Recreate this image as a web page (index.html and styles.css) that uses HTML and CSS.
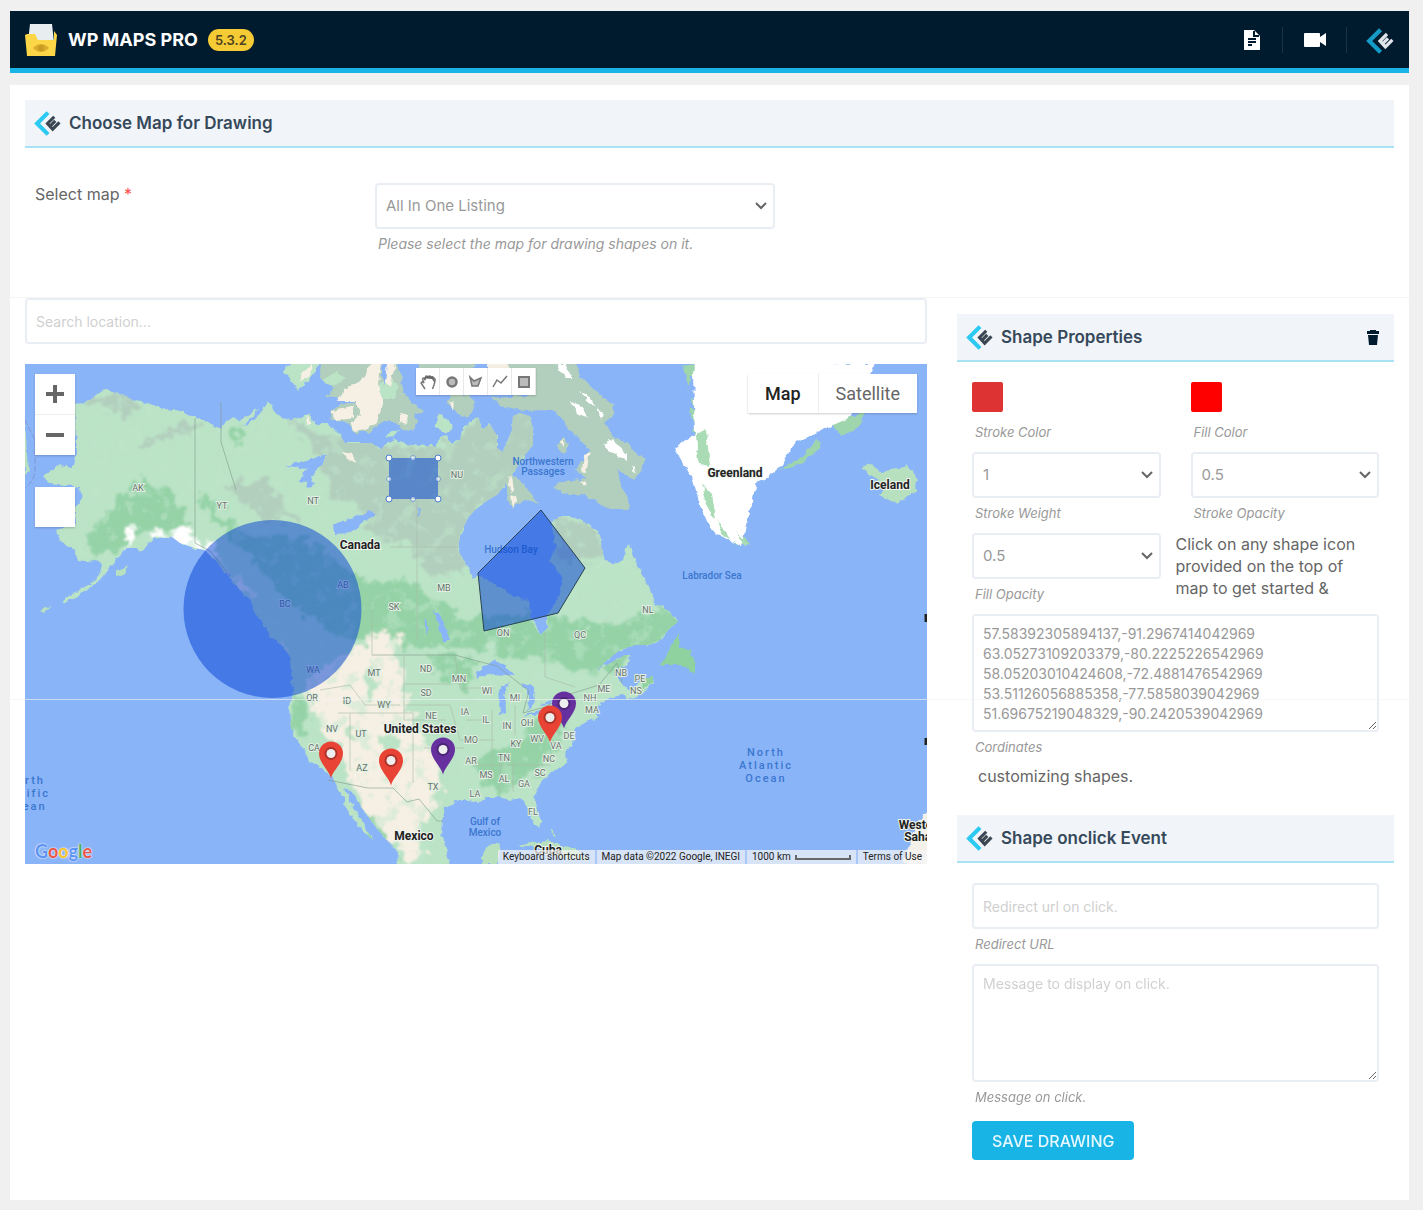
FILE: index.html
```html
<!DOCTYPE html>
<html lang="en">
<head>
<meta charset="utf-8">
<meta name="viewport" content="width=device-width, initial-scale=1">
<title>WP Maps Pro – Drawing</title>
<link rel="stylesheet" href="styles.css">
</head>
<body>
<svg class="sprite" aria-hidden="true">
  <symbol id="brand" viewBox="0 0 26 26">
    <path d="M13.500 2.500L3 13l10.500 10.500" fill="none" stroke="var(--arrow, #2cc9f3)" stroke-width="4"/>
    <path d="M19.500 6.500L13 13l5 5.500 6.500-6.500M15.500 15.500l5-5" fill="none" stroke="var(--mark, #3a4652)" stroke-width="3"/>
  </symbol>
  <symbol id="pin" viewBox="0 0 26 38">
    <path d="M13 37.500C11.500 30 1 22 1 12.500a12 12 0 0 1 24 0C25 22 14.500 30 13 37.500z" fill="currentColor"/>
    <circle cx="13" cy="12.500" r="6.500" fill="#000" opacity=".25"/>
    <circle cx="13" cy="12.500" r="4.500" fill="#eee"/>
  </symbol>
</svg>

<header class="topbar">
  <svg class="logo" viewBox="0 0 32 34" aria-hidden="true">
    <path d="M5 1h22l2 18H3z" fill="#e8edf0"/>
    <path d="M0 12l2-1h8l3 6h16V8l3 4-2 21H2z" fill="#fdd648"/>
    <path d="M8 25q8-8 16 0q-8 8-16 0z" fill="#d9ac2b"/>
    <circle cx="16" cy="25" r="3" fill="#c99b22"/>
  </svg>
  <h1>WP MAPS PRO</h1>
  <span class="version">5.3.2</span>
  <nav class="toplinks">
    <a href="#docs" aria-label="Documentation"><svg width="18" height="22" viewBox="0 0 18 22"><path d="M1 1h10l6 6v14H1z" fill="#fff"/><path d="M11 2v5h5M5 10h8M5 13h8M5 16h4" fill="none" stroke="#001b2e" stroke-width="2"/></svg></a>
    <a href="#videos" aria-label="Videos"><svg width="24" height="16" viewBox="0 0 24 16"><path d="M2 1h14q1 0 1 1v3l6-4v13l-6-4v4q0 1-1 1H2q-1 0-1-1V2q0-1 1-1z" fill="#fff"/></svg></a>
    <a class="vendor" href="#vendor" aria-label="Vendor site"><svg width="28" height="28"><use href="#brand"/></svg></a>
  </nav>
</header>

<main class="panel">
  <h2 class="title"><svg class="mark"><use href="#brand"/></svg>Choose Map for Drawing</h2>
  <div class="choose">
    <label for="map">Select map <span class="required">*</span></label>
    <div class="choose-field">
      <select id="map"><option>All In One Listing</option></select>
      <p class="hint">Please select the map for drawing shapes on it.</p>
    </div>
  </div>

  <div class="workspace">
    <section class="canvas">
      <input class="search" type="text" aria-label="Search location" placeholder="Search location...">
      <div class="map">
        <svg class="geo" viewBox="25 364 902 500" preserveAspectRatio="xMidYMid slice" role="img" aria-label="Map of North America">
          <defs>
            <path id="mainland" d="M75 405L90 400 105 389 115 393 128 396 132 400 150 404 165 409 180 411 188 415 197 417 208 422 215 427 222 429 226 421 234 417 240 421 250 413 260 408 243 427 252 421 262 412 268 402 272 405 276 414 282 418 290 420 300 418 308 414 315 424 328 424 337 430 345 443 360 443 372 443 380 450 388 442 395 439 405 444 420 446 436 446 440 438 446 436 452 445 460 440 462 430 470 422 478 416 482 430 490 424 497 436 497 448 503 452 508 440 512 430 513 416 520 413 530 416 533 430 533 445 525 455 515 470 505 485 497 495 488 500 475 510 468 518 460 535 458 550 462 558 468 568 472 578 480 575 495 585 515 597 529 600 531 615 535 627 540 635 548 628 547 615 552 608 560 595 562 580 557 568 550 560 556 545 552 530 553 520 562 517 576 517 588 525 600 535 602 550 605 560 614 565 623 560 628 543 635 560 643 575 650 590 655 603 668 611 678 622 670 628 660 640 648 645 635 645 620 650 605 662 598 670 612 662 625 655 632 655 628 665 615 672 622 685 632 690 640 682 652 676 654 682 640 695 628 700 622 695 612 697 600 703 595 712 598 718 585 722 575 730 573 745 565 750 567 762 552 772 540 785 534 795 537 808 541 820 539 828 533 822 528 808 520 798 510 800 500 797 488 797 480 802 468 800 458 800 445 808 442 820 441 835 445 845 450 866 397 866 398 852 385 838 372 822 360 805 352 792 345 788 348 797 355 810 362 820 368 832 373 840 363 832 355 822 350 812 344 805 346 802 338 788 333 778 322 768 310 762 305 752 297 740 291 728 289 708 292 700 293 690 290 660 285 648 270 635 262 622 255 612 250 600 240 590 228 575 215 560 205 550 195 548 180 543 172 537 163 538 155 537 148 545 140 552 136 548 127 548 120 557 110 568 102 578 92 586 80 595 65 602 60 602 75 592 90 584 99 575 103 562 96 560 85 561 77 560 76 550 68 547 60 540 56 530 75 525 75 505 82 500 80 487 50 483 43 477 52 470 60 465 72 467 76 458Z"/>
            <clipPath id="land"><use href="#mainland"/></clipPath>
            <filter id="rough" x="-10%" y="-10%" width="120%" height="120%">
              <feTurbulence type="fractalNoise" baseFrequency=".08" numOctaves="4" seed="4"/>
              <feDisplacementMap in="SourceGraphic" scale="26" xChannelSelector="R" yChannelSelector="G"/>
              <feGaussianBlur stdDeviation="1"/>
            </filter>
            <filter id="coast" x="-5%" y="-5%" width="110%" height="110%">
              <feTurbulence type="fractalNoise" baseFrequency=".15" numOctaves="2" seed="8"/>
              <feDisplacementMap in="SourceGraphic" scale="6" xChannelSelector="R" yChannelSelector="G"/>
            </filter>
            <filter id="speckle" x="0" y="0" width="100%" height="100%">
              <feTurbulence type="fractalNoise" baseFrequency=".07" numOctaves="4" seed="11"/>
              <feColorMatrix values="0 0 0 0 .52  0 0 0 0 .79  0 0 0 0 .6  0 5 0 0 -2.600"/>
            </filter>
          </defs>
          <rect x="25" y="364" width="902" height="500" fill="#8ab4f8"/>
          <use href="#mainland" fill="#bbe3c6" filter="url(#coast)"/>
          <g clip-path="url(#land)">
            <g filter="url(#rough)">
              <path fill="#b2cfbd" d="M85 400l30-10 30 18-25 8zM135 443l60-23 8 8-65 20zM285 420l40 10 45 15 70 0 75-45 40 20-20 50-60 40-12 65-30 0-25-30-33-10-20-30-20-5-20-50zM220 483l45 0 35 40-35-4zM553 515l50 10 5 35-45 0z"/>
              <path fill="#95d3a7" d="M228 425l8 0 3 20-8 0zM140 480l30 10 20 35-60 12-35 25-10-30zM205 495l40 40 60 0 55 45 45 0 60 40 60-5 90 10 60-20 22 20-70 30-15 20-60-10-60-15-90-5-60-5-55-40-90-100zM430 655l45 5-5 35-30-20zM291 690l15 10 3 40-20-10zM475 760l50-20 40-20-20 50-50 25-15-20zM355 810l25 45 20 10-30-60zM525 735l30-30 20-5-30 45z"/>
              <path fill="#f5f0e3" d="M345 655l39-25 20 8-8 18 10 35 10 40 28 20-5 35-10 35-15 5 10 30-15 6-35-40-25-40-10-30-25-30-5-30 10-25z"/>
              <path fill="#bbe3c6" d="M362 676l10-8 6 20-8 14zM384 735l10-6 4 22-12 8zM345 735l12-15-2 25z"/>
              <path fill="#fff" d="M170 528l12 0 35 22-8 12-40-12zM150 530l18 4-12 8zM125 525l10 2-8 25z"/>
              <path fill="#f5f0e3" d="M205 548l12 12 36 32-4 8-40-40zM275 640l15 8-2 10z"/>
            </g>
            <rect x="75" y="390" width="600" height="474" filter="url(#speckle)" opacity=".45"/>
          </g>
          <g fill="#8ab4f8" filter="url(#coast)">
            <path d="M285 466l30-8 12-3-6 10-14 18-8-2 8-13zM333 525l38-14 4 3-26 19-14 1zM476 672l18-12 15 8 6 8-22-2-16 4zM498 690l2 25 6-2-1-25 5-6zM520 683l10 12-3 18 8-12-2-15zM523 716l20-7-8 7zM540 706l15-7-4 6zM433 611l8 4 9 26-6 0zM424 615l5 14-3 6zM310 477l6 8-10 2zM417 506l4 8-3 2z"/>
          </g>
          <g filter="url(#coast)">
            <path fill="#bbe3c6" d="M283 372L286 366 300 362 320 362 313 375 305 385 298 390 292 381zM434 426L440 413 452 424 453 430 445 434zM385 438l4-6 10-3-4 8z"/>
            <path fill="#b2cfbd" d="M320 378L322 362 395 362 400 372 402 386 408 400 423 411 421 414 414 412 417 422 416 428 403 430 396 422 383 421 370 432 353 432 350 424 332 420 330 410 340 405 356 401 345 398 325 396 335 389 328 384zM448 404L450 394 470 394 475 404 468 418 460 415zM418 362l58 0-6 14-48 0z"/>
            <path fill="#b2cfbd" d="M490 362L575 362 580 376 590 386 600 395 612 403 615 413 605 422 612 436 625 442 645 460 641 470 636 480 630 478 618 470 620 482 630 505 628 510 610 510 595 500 585 494 570 495 553 488 556 483 580 480 586 478 575 470 590 450 580 440 565 424 555 410 545 410 525 411 500 406 492 398 530 396zM507 478L511 474 520 480 530 492 538 503 525 500 512 508 507 498zM558 444L563 438 569 444 565 453 558 450z"/>
            <path fill="#bbe3c6" d="M378 385l12-8 8 8-4 14-12 0zM322 380l14-8 10 6-14 8z"/>
            <path fill="#f5f0e3" d="M345 389l18-10 10-18 8 0-2 24 4 20-6 16-10 8-14 2-2-8 10-8-6-14-18 0zM331 410l22-4 0 12-18 3zM385 362l10 0-4 26-6-6zM400 413l8 2-2 10-6-2zM450 403l4-2-1 10zM302 372l10-8-2 12-10 6zM486 362l22 0 4 8-22 0zM342 452l10 2 4 8-8-2zM306 416l6 6-4 2zM508 478l4-2 2 14-4 2zM511 496l6 2-4 10zM560 442l4-2 0 8zM584 455l6-2-4 20-4-2zM580 481l7 2-3 4z"/>
            <path fill="#8ab4f8" d="M382 362l5 0-2 22-3-6zM496 418l4 0 4 20-4 4z"/>
            <path fill="#fff" d="M557 364l8 0 8 14-8 0zM571 400l10 6 7 12-12-4zM579 391l8 4 8 10-6-2zM603 445l10-6 14 16 0 6-14-8zM632 466l4 2-2 6zM597 406l6 8-2 6z"/>
            <path fill="#9ed5ad" d="M682 366l12-2 24 40 2 100 30 40-14 0-18-20-12-50-12-40-6-50zM828 420l26-4 10-6-2 14-20 12zM779 470l22-12 16-20 4 10-24 18z"/>
            <path fill="#8ab4f8" d="M690 376l10 2 4 20-6 6 8 10-6 6 8 20-10-4-12-20z"/>
            <path fill="#9ed5ad" d="M690 398l14 8 4 8-12-4zM688 408l8 2 4 10-6 2z"/>
            <path fill="#fff" d="M695 360l180 4-16 30-10 24-36 16-12 8-4-2-16 26-14 12-10 4-6 24-10 40-18-10-12-6-10-22-8-28-18-32 20-14-2-60z"/>
            <path fill="#a9dbb5" d="M696 434l10-4 4 36-12-2zM702 484l10 10 4 26-8-10zM718 520l12 18-8-4zM736 532l14 14-8-2z"/>
            <path fill="#b7e0bf" d="M861 467l10-3 10 8 14-3 12-4 12 14-5 14-18 11-16-8 4-7-14-4 9-5zM117 570l12-5-4 9-8 3z"/>
            <path fill="#8fd29f" d="M678 633l-9 18-8 14 22 0 12 9 0-12-5-11-11-2zM645 678l8-2 0 6-14 10z"/>
            <path fill="#b7e0bf" d="M482 855l6-10 12-2-2 21-16 0zM517 846l30-6 30 10 12 10-30-2-26-12zM550 828l6 8-3 0zM25 420l3 50-3 8zM40 611l12-6-8 8z"/>
            <path fill="#f3f1ea" d="M932 808l-11 10-8 14-10 32 30 2z"/>
          </g>
          <g class="borders">
            <path d="M195 418v125l15 8 20 25M221 402v40l15 48M372 655h83l22 6 20 5 32 25-6 22 22-6 22-12 32-10 18-22 5 20M328 780l40 8 25 0 14 14 12-3 18 22h6"/>
            <path class="thin" d="M417 500v140M372 610v45M390 547h68M404 655v65h42M320 690l30-5 15 20 35 0M338 713h75v70M350 713v58M405 684h45M405 705h45l10 35h35M424 748h40M455 656l5 32h35M466 720h22M492 710v70M515 705v30M475 765h75M513 762v30M500 762v30M545 632v45l30 10"/>
            <path class="sea" d="M25 420l10 20v30q0 10-10 18"/>
          </g>

          <g class="states">
            <text x="138" y="491">AK</text><text x="222" y="509">YT</text><text x="313" y="504">NT</text><text x="457" y="478">NU</text><text x="343" y="588">AB</text><text x="285" y="607">BC</text><text x="394" y="610">SK</text><text x="444" y="591">MB</text><text x="503" y="636">ON</text><text x="580" y="638">QC</text><text x="648" y="613">NL</text><text x="374" y="676">MT</text><text x="426" y="672">ND</text><text x="459" y="682">MN</text><text x="426" y="696">SD</text><text x="487" y="694">WI</text><text x="347" y="704">ID</text><text x="384" y="708">WY</text><text x="313" y="673">WA</text><text x="312" y="701">OR</text><text x="431" y="719">NE</text><text x="465" y="715">IA</text><text x="515" y="701">MI</text><text x="486" y="723">IL</text><text x="507" y="729">IN</text><text x="527" y="726">OH</text><text x="332" y="732">NV</text><text x="314" y="751">CA</text><text x="361" y="737">UT</text><text x="362" y="771">AZ</text><text x="471" y="743">MO</text><text x="516" y="747">KY</text><text x="537" y="742">WV</text><text x="556" y="749">VA</text><text x="471" y="764">AR</text><text x="504" y="761">TN</text><text x="549" y="762">NC</text><text x="540" y="776">SC</text><text x="486" y="778">MS</text><text x="504" y="782">AL</text><text x="524" y="787">GA</text><text x="475" y="797">LA</text><text x="433" y="790">TX</text><text x="533" y="815">FL</text><text x="569" y="739">DE</text><text x="592" y="713">MA</text><text x="590" y="701">NH</text><text x="604" y="692">ME</text><text x="621" y="676">NB</text><text x="640" y="682">PE</text><text x="636" y="694">NS</text>
          </g>
          <g class="seas">
            <text x="543" y="465">Northwestern</text><text x="543" y="475">Passages</text>
            <text x="511" y="553">Hudson Bay</text><text x="712" y="579">Labrador Sea</text>
            <text x="485" y="825">Gulf of</text><text x="485" y="836">Mexico</text>
            <g class="oceans"><text x="766" y="756">North</text><text x="766" y="769">Atlantic</text><text x="766" y="782">Ocean</text><text x="26" y="784">North</text><text x="26" y="797">Pacific</text><text x="26" y="810">Ocean</text></g>
          </g>
          <g class="shapes">
            <circle cx="272.500" cy="609" r="89"/>
            <path class="edged" d="M541 510L585 568 558 613 484 631 478 573z"/>
            <rect x="389" y="458" width="49" height="41"/>
          </g>
          <g class="handles">
            <circle cx="389" cy="458" r="3"/><circle cx="438" cy="458" r="3"/><circle cx="389" cy="499" r="3"/><circle cx="438" cy="499" r="3"/>
            <g opacity=".6"><circle cx="413" cy="458" r="2.500"/><circle cx="413" cy="499" r="2.500"/><circle cx="389" cy="479" r="2.500"/><circle cx="438" cy="479" r="2.500"/></g>
          </g>
          <g class="countries">
            <text x="360" y="549">Canada</text><text x="420" y="733">United States</text><text x="414" y="840">Mexico</text><text x="735" y="477">Greenland</text><text x="890" y="489">Iceland</text><text x="548" y="854">Cuba</text><text x="921" y="829">Western</text><text x="923" y="841">Sahara</text>
            <path d="M926 614v8M926 738v7" stroke="#222" stroke-width="3"/>
          </g>
          <g color="#e94335"><use href="#pin" x="318" y="741" width="26" height="38"/><use href="#pin" x="378" y="748" width="26" height="38"/></g>
          <g color="#66309f"><use href="#pin" x="430" y="737" width="26" height="38"/><use href="#pin" x="551" y="691" width="26" height="38"/></g>
          <use href="#pin" x="537" y="705" width="26" height="38" color="#e94335"/>
        </svg>

        <div class="zoom">
          <button type="button" aria-label="Zoom in"><svg width="18" height="18"><path d="M9 0v18M0 9h18"/></svg></button>
          <button type="button" aria-label="Zoom out"><svg width="18" height="18"><path d="M0 9h18"/></svg></button>
        </div>
        <div class="blank"></div>
        <div class="tools">
          <button type="button" aria-label="Pan"><svg viewBox="0 0 16 16"><path d="M5 15L1 9q1-2 3 0L2.500 5q1-2 2.500 0l.5-2q1-2 2.500 0q2-2 3 0q2-1 2.500 1q2 0 1.500 3l-1 4-1.500 4" fill="#fff" stroke-width="1.500"/><path d="M4 6l1-3q2-2 8 0l2 4-1 1-2-3-6-.5-1 2z" fill="#666" stroke="none"/></svg></button>
          <button type="button" aria-label="Circle"><svg viewBox="0 0 16 16"><circle cx="8" cy="8" r="4.500" fill="#bbb" stroke-width="2.500"/></svg></button>
          <button type="button" aria-label="Polygon"><svg viewBox="0 0 16 16"><path d="M2 3l4 4 7-3-3 8-6 0z" fill="#bbb" stroke-width="1.500"/></svg></button>
          <button type="button" aria-label="Line"><svg viewBox="0 0 16 16"><path d="M1 13l4-7 4 3 6-7" fill="none" stroke-width="1.500"/></svg></button>
          <button type="button" aria-label="Rectangle"><svg viewBox="0 0 16 16"><path d="M3 3h10v10H3z" fill="#bbb" stroke-width="2"/></svg></button>
        </div>
        <div class="types"><button class="on" type="button">Map</button><button type="button">Satellite</button></div>
        <div class="google"><span>G</span><span class="r">o</span><span class="y">o</span><span>g</span><span class="g">l</span><span class="r">e</span></div>
        <div class="credits">
          <a href="#keys">Keyboard shortcuts</a><span>Map data ©2022 Google, INEGI</span><span class="scale">1000 km <i></i></span><a href="#terms">Terms of Use</a>
        </div>
      </div>
    </section>

    <aside class="side">
      <h2 class="title"><svg class="mark"><use href="#brand"/></svg>Shape Properties
        <button class="trash" type="button" aria-label="Delete shape"><svg width="14" height="17" viewBox="0 0 14 17"><path d="M4 1h6v1h3v3H1V2h3zM2 6h10l-1 10H3z" fill="#001b2e"/></svg></button>
      </h2>
      <div class="props">
        <div class="field"><button id="stroke-color" class="swatch stroke" type="button"></button><label class="hint" for="stroke-color">Stroke Color</label></div>
        <div class="field"><button id="fill-color" class="swatch fill" type="button"></button><label class="hint" for="fill-color">Fill Color</label></div>
        <div class="field"><select id="weight"><option>1</option></select><label class="hint" for="weight">Stroke Weight</label></div>
        <div class="field"><select id="opacity"><option>0.5</option></select><label class="hint" for="opacity">Stroke Opacity</label></div>
        <div class="field"><select id="fill-opacity"><option>0.5</option></select><label class="hint" for="fill-opacity">Fill Opacity</label></div>
        <p class="note">Click on any shape icon provided on the top of map to get started &amp;</p>
        <div class="field wide"><textarea id="coords">57.58392305894137,-91.2967414042969
63.05273109203379,-80.2225226542969
58.05203010424608,-72.4881476542969
53.51126056885358,-77.5858039042969
51.69675219048329,-90.2420539042969</textarea><label class="hint" for="coords">Cordinates</label></div>
      </div>
      <p class="tail">customizing shapes.</p>
      <h2 class="title"><svg class="mark"><use href="#brand"/></svg>Shape onclick Event</h2>
      <div class="props">
        <div class="field wide"><input id="url" type="text" placeholder="Redirect url on click."><label class="hint" for="url">Redirect URL</label></div>
        <div class="field wide"><textarea id="message" placeholder="Message to display on click."></textarea><label class="hint" for="message">Message on click.</label></div>
        <button class="save" type="button">SAVE DRAWING</button>
      </div>
    </aside>
  </div>
</main>
</body>
</html>
```
FILE: styles.css
```css
* { box-sizing: border-box; }

body {
  margin: 0;
  padding: 11px 14px 11px 10px;
  background: #f0f0f1;
  color: #666;
  font: 16px/22px Inter, "Open Sans", sans-serif;
}

h1, h2, p { margin: 0; }
button { padding: 0; border: 0; font: inherit; cursor: pointer; }
.sprite { position: absolute; width: 0; height: 0; }

/* Top bar */
.topbar {
  display: flex;
  align-items: center;
  height: 62px;
  padding: 0 15px;
  background: #001b2e;
  border-bottom: 5px solid #18b4e6;
}
.logo { width: 32px; height: 34px; margin-right: 11px; }
.topbar h1 { color: #fff; font-size: 18px; font-weight: 700; }
.version {
  margin-left: 10px;
  padding: 0 7px;
  border-radius: 11px;
  background: #f5cb35;
  color: #4d4220;
  font-size: 13px;
  font-weight: 600;
}
.toplinks { display: flex; align-items: center; margin-left: auto; }
.toplinks a { display: grid; place-items: center; width: 64px; height: 26px; border-left: 1px solid #1d3345; }
.toplinks a:first-child { width: 60px; border: 0; }
.toplinks .vendor { width: 48px; justify-content: end; --arrow: #149bc8; --mark: #dfe5ea; }

/* Panel */
.panel { margin-top: 12px; min-height: 1114px; padding: 15px 0 40px; background: #fff; }
.panel > .title { margin: 0 15px; }
.title {
  display: flex;
  align-items: center;
  gap: 8px;
  height: 48px;
  padding: 0 14px 0 9px;
  background: #f1f5f9;
  border-bottom: 2px solid #a8e2f4;
  color: #36495a;
  font-size: 17px;
  font-weight: 600;
}
.mark { width: 27px; height: 27px; }
.trash { display: grid; margin-left: auto; background: none; }

.choose { display: flex; padding: 35px 25px 43px; }
.choose > label { width: 340px; font-size: 16px; }
.choose-field { width: 400px; }
.required { color: #ff4d4d; }
.hint { display: block; padding: 5px 3px 0; color: #999; font-size: 13px; font-style: italic; line-height: 20px; }
.choose .hint { font-size: 14px; }

select, input, textarea {
  display: block;
  width: 100%;
  height: 46px;
  padding: 0 9px;
  border: 2px solid #e9edf4;
  border-radius: 4px;
  background: #fff;
  color: #999;
  font: 15px/20px Inter, "Open Sans", sans-serif;
}
select {
  appearance: none;
  background: #fff url("data:image/svg+xml,%3Csvg xmlns='http://www.w3.org/2000/svg' width='12' height='8'%3E%3Cpath d='M1 1l5 5 5-5' fill='none' stroke='%23666' stroke-width='2'/%3E%3C/svg%3E") no-repeat right 6px center;
}
textarea { height: 118px; padding: 8px 9px; font-size: 14px; resize: vertical; }
::placeholder { color: #d0d0d0; font-size: 14px; opacity: 1; }

/* Drawing workspace */
.workspace {
  position: relative;
  display: flex;
  gap: 30px;
  padding: 0 15px;
  border-top: 1px solid #f4f4f4;
}
.workspace::after {
  content: "";
  position: absolute;
  inset: 401px 0 auto;
  height: 1px;
  background: #f3f3f3;
  opacity: .6;
  pointer-events: none;
}
.canvas { flex: 1; min-width: 0; }
.map { position: relative; height: 500px; margin-top: 20px; overflow: hidden; font-family: Roboto, sans-serif; }
.geo { display: block; width: 100%; height: 100%; }
.geo text { text-anchor: middle; paint-order: stroke; }
.borders { fill: none; stroke: #7f9a8b; stroke-width: 1; opacity: .6; }
.borders .thin { stroke: #a8b8a6; }
.borders .sea { stroke: #7c80b8; stroke-dasharray: 6 2; }
.states { fill: #65746b; stroke: #e2efe4; stroke-width: 2px; font-size: 9px; }
.seas { fill: #3a77cf; font-size: 10px; font-weight: 500; }
.oceans { font-size: 11px; letter-spacing: 2px; }
.countries { fill: #222; stroke: #eef4ee; stroke-width: 2px; font-size: 12px; font-weight: 700; }
.shapes { fill: #003ed4; fill-opacity: .5; }
.shapes .edged { stroke: #2a4252; stroke-width: 1; }
.handles { fill: #fff; stroke: #4a7bd0; stroke-width: 1; }

.zoom, .blank, .tools, .types { position: absolute; background: #fff; box-shadow: 0 1px 2px #0003; }
.zoom { top: 10px; left: 10px; width: 40px; }
.zoom button { display: grid; place-items: center; width: 100%; height: 40px; background: none; }
.zoom button + button { border-top: 1px solid #eee; height: 41px; }
.zoom svg { fill: none; stroke: #666; stroke-width: 4; }
.blank { top: 123px; left: 10px; width: 40px; height: 40px; }
.tools { top: 4px; left: 50%; display: flex; margin-left: -60px; }
.tools button { display: grid; place-items: center; width: 24px; height: 27px; background: none; border-right: 1px solid #e8e8e8; }
.tools svg { width: 16px; height: 16px; stroke: #777; }
.types { top: 10px; right: 10px; display: flex; height: 39px; }
.types button { padding: 0 17px; background: none; color: #666; font-size: 18px; }
.types .on { border-right: 1px solid #eee; color: #222; font-weight: 500; }
.google { position: absolute; left: 10px; bottom: 1px; color: #5b93f5; font: 700 18px/24px Lato, sans-serif; text-shadow: 0 0 2px #fff, 0 0 1px #fff; }
.google .r { color: #ea5548; }
.google .y { color: #f4c430; }
.google .g { color: #4caf60; }
.credits {
  position: absolute;
  right: 0;
  bottom: 0;
  display: flex;
  height: 14px;
  background: #f5f5f5b8;
  font-size: 10px;
  line-height: 14px;
}
.credits > * { padding: 0 5px; color: #222; text-decoration: none; white-space: nowrap; }
.credits > * + * { border-left: 2px solid #a9c8f8; }
.scale { display: flex; align-items: center; gap: 4px; }
.scale i { width: 56px; height: 5px; border: 2px solid #666; border-top: 0; }

/* Properties column */
.side { width: 437px; padding-top: 16px; }
.props { display: grid; grid-template-columns: 1fr 1fr; column-gap: 30px; row-gap: 10px; padding: 20px 15px 0; }
.wide { grid-column: 1 / -1; }
.swatch { display: block; width: 31px; height: 30px; margin-bottom: 5px; border-radius: 2px; }
.stroke { background: #dd3333; }
.fill { background: #f00; }
.note { margin: 0 0 0 -15px; }
.tail { padding: 8px 21px 28px; }
.save {
  justify-self: start;
  height: 39px;
  margin-top: 4px;
  padding: 0 20px;
  border-radius: 4px;
  background: #18b4e6;
  color: #e6f8fe;
  font-size: 16px;
  font-weight: 500;
}
```
